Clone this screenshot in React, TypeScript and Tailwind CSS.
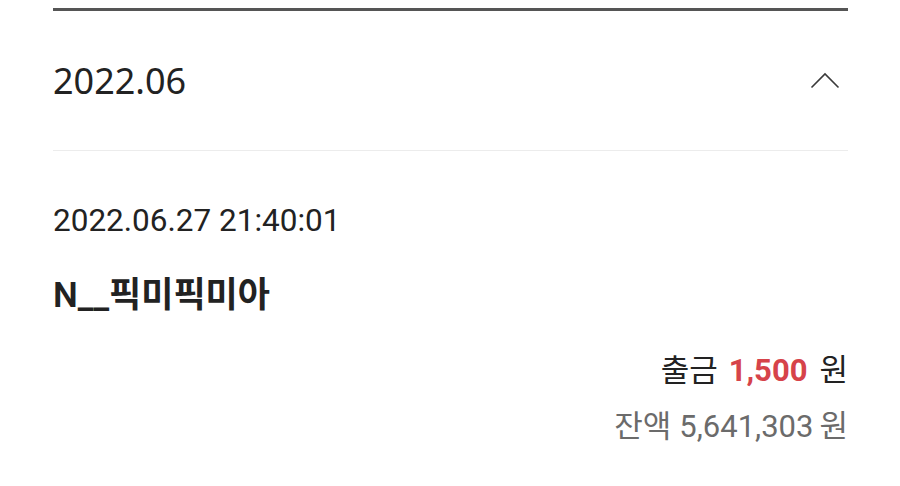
export default function App() {
  return (
    <div className="w-[900px] h-[486px] bg-white overflow-hidden pl-[53px] pr-[52px] pt-[8px]">
      {/* 상단 굵은 라인 */}
      <div className="h-[3px] bg-[#555555]" />

      {/* 월 헤더 */}
      <div className="h-[140px] flex items-center justify-between border-b border-[#ececec]">
        <span
          className="text-[36px] leading-none text-[#222222]"
          style={{ fontFamily: '"Noto Sans", sans-serif' }}
        >
          2022.06
        </span>
        <svg
          className="w-[30px] h-[18px] mr-[8px] mb-[1px]"
          viewBox="0 0 30 18"
          fill="none"
          stroke="#3a3a3a"
          strokeWidth={1.6}
        >
          <path d="M1.5 16.5L15 3L28.5 16.5" />
        </svg>
      </div>

      {/* 거래 내역 */}
      <div
        className="flex flex-col text-[#222222]"
        style={{ fontFamily: 'Roboto, "Noto Sans CJK KR", sans-serif' }}
      >
        <div className="mt-[54px] text-[31.5px] leading-none">2022.06.27 21:40:01</div>
        <div className="mt-[41px] text-[35px] leading-none font-semibold">N__픽미픽미아</div>
        <div className="mt-[42px] self-end flex items-baseline text-[31px] leading-none">
          <span>출금</span>
          <span className="ml-[11px] font-bold text-[#d6434a]">1,500</span>
          <span className="ml-[12px]">원</span>
        </div>
        <div className="mt-[25px] self-end flex items-baseline text-[31px] leading-none text-[#6b6b6b]">
          <span>잔액</span>
          <span className="ml-[8px]">5,641,303</span>
          <span className="ml-[6px]">원</span>
        </div>
      </div>
    </div>
  );
}
